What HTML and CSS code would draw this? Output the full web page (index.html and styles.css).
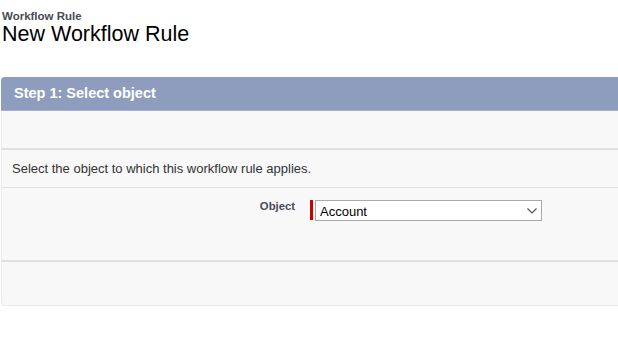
FILE: index.html
```html
<!DOCTYPE html>
<html lang="en">
<head>
  <meta charset="UTF-8">
  <title>New Workflow Rule</title>
  <link rel="stylesheet" href="styles.css">
</head>
<body>
  <div class="page-head">
    <div class="page-type">Workflow Rule</div>
    <h1>New Workflow Rule</h1>
  </div>

  <div class="panel">
    <div class="panel-title">Step 1: Select object</div>
    <div class="panel-top"></div>
    <div class="panel-info">Select the object to which this workflow rule applies.</div>
    <div class="panel-form">
      <label class="field-label" for="object">Object</label>
      <div class="required">
        <select id="object">
          <option>Account</option>
        </select>
        <svg class="caret" width="10" height="6" viewBox="0 0 10 6">
          <path d="M0.5 0.5 L5 5 L9.5 0.5" fill="none" stroke="#555" stroke-width="1.2"/>
        </svg>
      </div>
    </div>
    <div class="panel-bottom"></div>
  </div>
</body>
</html>
```

FILE: styles.css
```css
body {
  margin: 0;
  font-family: Arial, "Liberation Sans", sans-serif;
  background: #fff;
  color: #000;
}
.page-head {
  padding: 10px 2px 0 2px;
}
.page-type {
  font-size: 11.5px;
  font-weight: bold;
  color: #4a4a56;
  line-height: 13px;
}
h1 {
  margin: 0;
  font-size: 21.5px;
  font-weight: normal;
  line-height: 23px;
}
.panel {
  margin: 31px 0 0 1px;
  background: #f8f8f8;
  border: 1px solid #eaeaea;
  border-right: none;
  border-top: none;
  border-radius: 4px 0 0 4px;
}
.panel-title {
  background: #8e9dbe;
  color: #fff;
  font-size: 14.5px;
  font-weight: bold;
  height: 33px;
  line-height: 33px;
  padding-left: 13px;
  border-radius: 4px 0 0 0;
  border-bottom: 1px solid #a4b1cf;
  margin-left: -1px;
}
.panel-top {
  height: 37px;
  border-bottom: 2px solid #e0e0e0;
}
.panel-info {
  font-size: 13px;
  color: #333;
  padding: 11px 0 0 10px;
  height: 26px;
  border-bottom: 1px solid #e0e0e0;
}
.panel-form {
  display: flex;
  align-items: flex-start;
  height: 74px;
  padding-top: 12px;
  box-sizing: border-box;
  border-bottom: 2px solid #e0e0e0;
}
.field-label {
  width: 293px;
  text-align: right;
  font-size: 11.3px;
  font-weight: bold;
  color: #4a4a56;
  padding-top: 0;
}
.required {
  position: relative;
  margin-left: 15px;
  border-left: 3px solid #c00;
  padding-left: 2px;
  height: 20px;
}
.required select {
  appearance: none;
  -webkit-appearance: none;
  display: block;
  width: 227px;
  height: 21px;
  font-family: Arial, "Liberation Sans", sans-serif;
  font-size: 13px;
  color: #000;
  background: #fff;
  border: 1px solid #a9a9a9;
  padding: 1px 0 0 4px;
  margin: 0;
  border-radius: 0;
}
.caret {
  position: absolute;
  right: 5px;
  top: 8px;
}
.panel-bottom {
  height: 43px;
}
```
